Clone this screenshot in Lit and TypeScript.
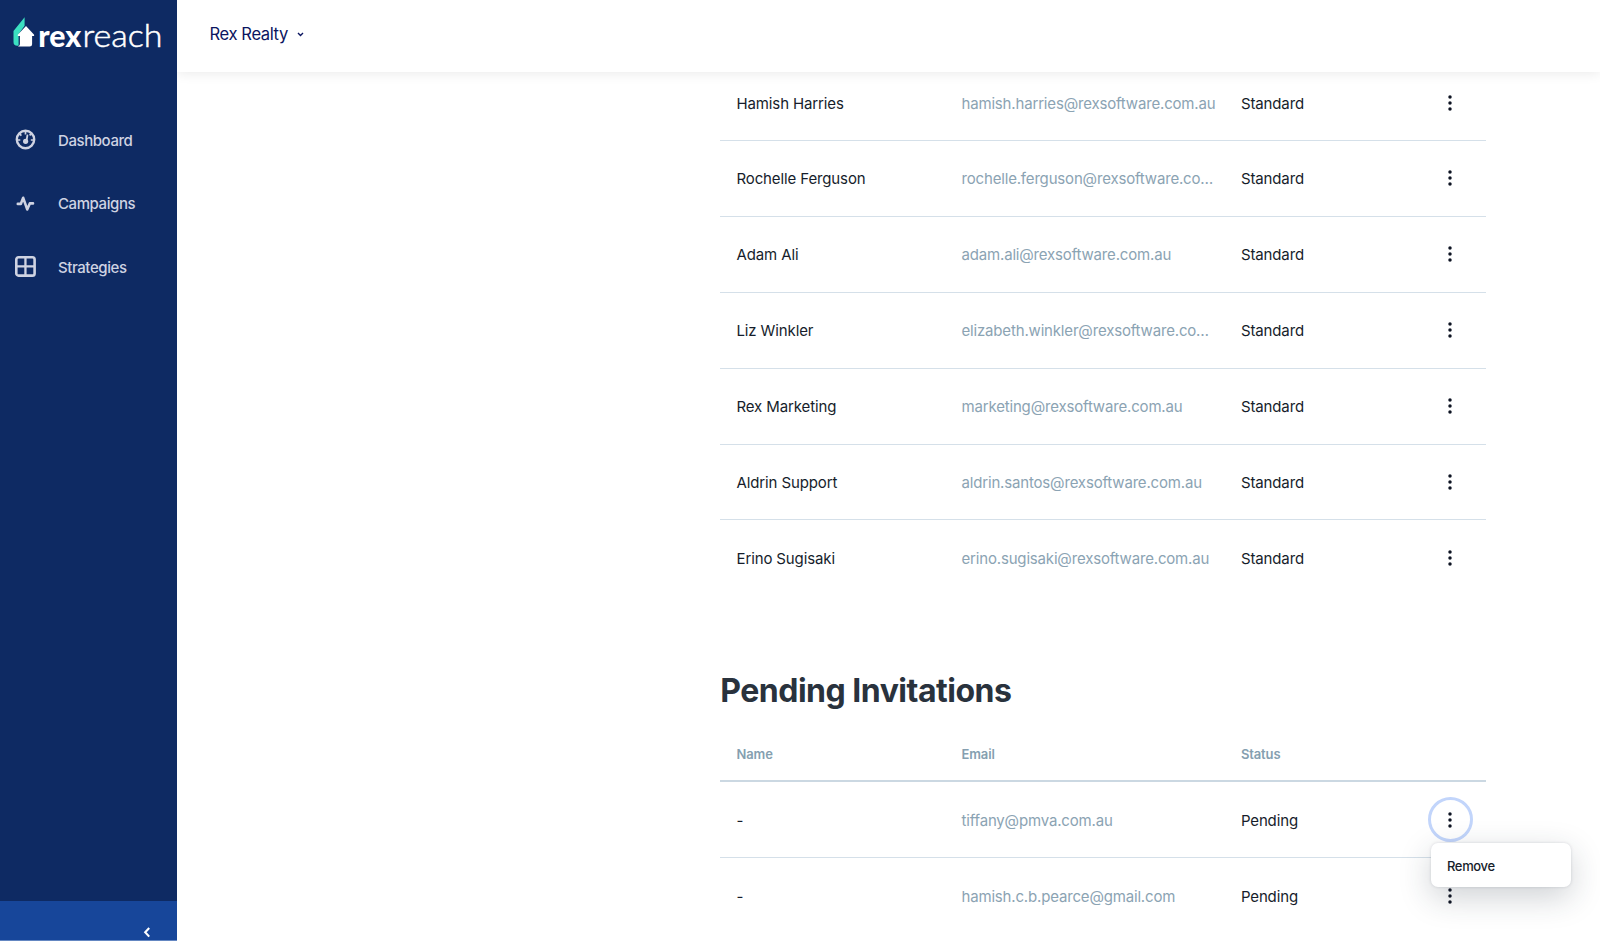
import { LitElement, html, css, svg } from "lit";
import { customElement } from "lit/decorators.js";

interface Person { name: string; email: string; status: string; open?: boolean; }

const USERS: Person[] = [
  { name: "Hamish Harries", email: "hamish.harries@rexsoftware.com.au", status: "Standard" },
  { name: "Rochelle Ferguson", email: "rochelle.ferguson@rexsoftware.co…", status: "Standard" },
  { name: "Adam Ali", email: "adam.ali@rexsoftware.com.au", status: "Standard" },
  { name: "Liz Winkler", email: "elizabeth.winkler@rexsoftware.co…", status: "Standard" },
  { name: "Rex Marketing", email: "marketing@rexsoftware.com.au", status: "Standard" },
  { name: "Aldrin Support", email: "aldrin.santos@rexsoftware.com.au", status: "Standard" },
  { name: "Erino Sugisaki", email: "erino.sugisaki@rexsoftware.com.au", status: "Standard" },
];

const INVITES: Person[] = [
  { name: "-", email: "tiffany@pmva.com.au", status: "Pending", open: true },
  { name: "-", email: "hamish.c.b.pearce@gmail.com", status: "Pending" },
];

const dashboardIcon = svg`
  <circle cx="10.5" cy="10.5" r="8.7" fill="none" stroke="currentColor" stroke-width="2.4"/>
  <path d="M10.5 2v3.6M4.6 4.9l1.8 1.8M2.5 11h2.8M15.8 11h2.8M14.6 6.4l1.5-1.5" fill="none" stroke="currentColor" stroke-width="1.7"/>
  <path d="M12.4 6.4l-1 6" stroke="currentColor" stroke-width="1.8" stroke-linecap="round"/>
  <circle cx="10.6" cy="12.3" r="2.6" fill="currentColor"/>`;
const campaignsIcon = svg`
  <path d="M2.8 10.9h3L8.2 4.8l4 11.6 2.6-6h3.2" fill="none" stroke="currentColor" stroke-width="2.6" stroke-linecap="round" stroke-linejoin="round"/>`;
const strategiesIcon = svg`
  <rect x="1.3" y="1.3" width="18.3" height="18.3" rx="2.2" fill="none" stroke="currentColor" stroke-width="2.6"/>
  <path d="M10.45 1.3v18.3M1.3 10.45h18.3" stroke="currentColor" stroke-width="2.3"/>`;

const NAV = [
  { label: "Dashboard", icon: dashboardIcon },
  { label: "Campaigns", icon: campaignsIcon },
  { label: "Strategies", icon: strategiesIcon },
];

@customElement("user-row")
class UserRow extends LitElement {
  static properties = { person: { attribute: false } };
  declare person: Person;
  static styles = css`
    :host { display: grid; grid-template-columns: 225px 279.4px 1fr 73px; height: 75.87px; box-sizing: border-box;
      padding-left: 16.2px; align-items: center; border-bottom: 1px solid #d5e0e9; font-size: 15px; color: #161d2b; }
    .cell { white-space: nowrap; letter-spacing: -0.12px; padding-top: 1px; }
    .email { color: #8ba3b3; letter-spacing: -0.17px; }
    .action { position: relative; width: 45px; height: 45px; display: grid; place-items: center; margin-left: 14.3px;
      box-sizing: border-box; border-radius: 50%; }
    .focused { border: 3px solid #c2d5fb; }
    .menu { position: absolute; z-index: 2; top: 43px; left: 0; width: 140px; height: 44px; box-sizing: border-box; padding-left: 16.2px; padding-top: 1px;
      display: flex; align-items: center; background: #fff; border-radius: 7px; font-size: 13px; font-weight: 500; letter-spacing: -0.35px;
      box-shadow: 0 0 3px rgba(30,45,60,.16), 0 10px 32px rgba(30,45,60,.22); }
  `;
  render() {
    const p = this.person;
    return html`
      <span class="cell">${p.name}</span>
      <span class="cell email">${p.email}</span>
      <span class="cell">${p.status}</span>
      <div class="action ${p.open ? "focused" : ""}">
        <svg width="4" height="16" viewBox="0 0 4 16" fill="#0d1322">
          <circle cx="2" cy="2" r="1.75"/><circle cx="2" cy="8" r="1.75"/><circle cx="2" cy="14" r="1.75"/>
        </svg>
        ${p.open ? html`<div class="menu">Remove</div>` : ""}
      </div>`;
  }
}

@customElement("app-root")
class AppRoot extends LitElement {
  static styles = css`
    :host { display: grid; grid-template-columns: 177px 1fr; height: 941px; overflow: hidden; background: #fff;
      font-family: Inter, "Liberation Sans", sans-serif; }
    .side { display: flex; flex-direction: column; background: #0e2a63; color: #cfd3e2; }
    .logo { display: block; height: 72px; }
    nav { flex: 1; padding-top: 36px; }
    .item { display: flex; align-items: center; height: 63.6px; padding-left: 15px; gap: 22px; font-size: 15px; font-weight: 500; letter-spacing: -0.42px; }
    .item span { padding-top: 1px; }
    .foot { height: 40px; background: #17469a; display: flex; justify-content: flex-end; align-items: flex-end; padding: 0 26px 0 0; box-sizing: border-box;
      border-bottom: 1px solid #6487c2; }
    .page { display: grid; grid-template-rows: 72px 1fr; min-width: 0; min-height: 0; overflow: hidden; }
    header { z-index: 1; display: flex; align-items: center; gap: 9px; padding: 0 0 5px 32.5px; box-sizing: border-box; background: #fff;
      box-shadow: 0 1px 12px rgba(0,0,0,.09); color: #0b1560; font-size: 16.6px; letter-spacing: -0.4px; }
    header svg { margin-top: 2px; }
    main { overflow: hidden; padding-left: 543.3px; }
    .table { width: 766.2px; }
    .users { margin-top: -6.8px; }
    user-row:last-child { border-color: transparent; }
    h2 { margin: 74.6px 0 0; height: 40px; line-height: 40px; font-size: 32px; font-weight: 700; color: #29323d; letter-spacing: -0.5px; white-space: nowrap; }
    .head { display: grid; grid-template-columns: 225px 279.4px 1fr; align-items: center; height: 56px; margin-top: 15.6px; box-sizing: border-box; padding: 2px 0 0 16.2px;
      border-bottom: 2px solid #cbd8e2; font-size: 13px; font-weight: 600; letter-spacing: -0.12px; color: #859fb0; }
  `;
  render() {
    return html`
      <aside class="side">
        <svg class="logo" width="177" height="72" viewBox="0 0 177 72">
          <path d="M24.6 17.3v8.4L18.6 34v11.7h-1.3a3.8 3.8 0 0 1-3.8-3.8V31z" fill="#3be0c1"/>
          <path d="M26 26l7.9 8.4c.6.8.2 1.7-.7 1.7h-1.1v8.1a2.4 2.4 0 0 1-2.4 2.4H17.8c1.5-.5 2.1-1.4 2.1-2.8v-7.7h-1.2c-.9 0-1.3-.9-.7-1.7z" fill="#fff"/>
          <text x="38.3" y="46.6" font-family="Lato" font-weight="900" font-size="31" fill="#fff" textLength="43" lengthAdjust="spacingAndGlyphs">rex</text>
          <text x="82.4" y="46.6" font-family="Lato" font-weight="300" font-size="31.5" fill="#fff" stroke="#fff" stroke-width=".5" textLength="80" lengthAdjust="spacingAndGlyphs">reach</text>
        </svg>
        <nav>${NAV.map((n) => html`<div class="item"><svg width="21" height="21" viewBox="0 0 21 21">${n.icon}</svg><span>${n.label}</span></div>`)}</nav>
        <div class="foot">
          <svg width="8" height="17" viewBox="0 0 8 17"><path d="M6.2 5L2.2 9.3l4 4.3" fill="none" stroke="#fff" stroke-width="2.1"/></svg>
        </div>
      </aside>
      <div class="page">
        <header><span>Rex Realty</span>
          <svg width="7" height="5" viewBox="0 0 7 5"><path d="M1 1l2.5 2.5L6 1" fill="none" stroke="#0b1560" stroke-width="1.4"/></svg>
        </header>
        <main>
          <div class="table users">${USERS.map((p) => html`<user-row .person=${p}></user-row>`)}</div>
          <h2>Pending Invitations</h2>
          <div class="table">
            <div class="head"><span>Name</span><span>Email</span><span>Status</span></div>
            ${INVITES.map((p) => html`<user-row .person=${p}></user-row>`)}
          </div>
        </main>
      </div>`;
  }
}
